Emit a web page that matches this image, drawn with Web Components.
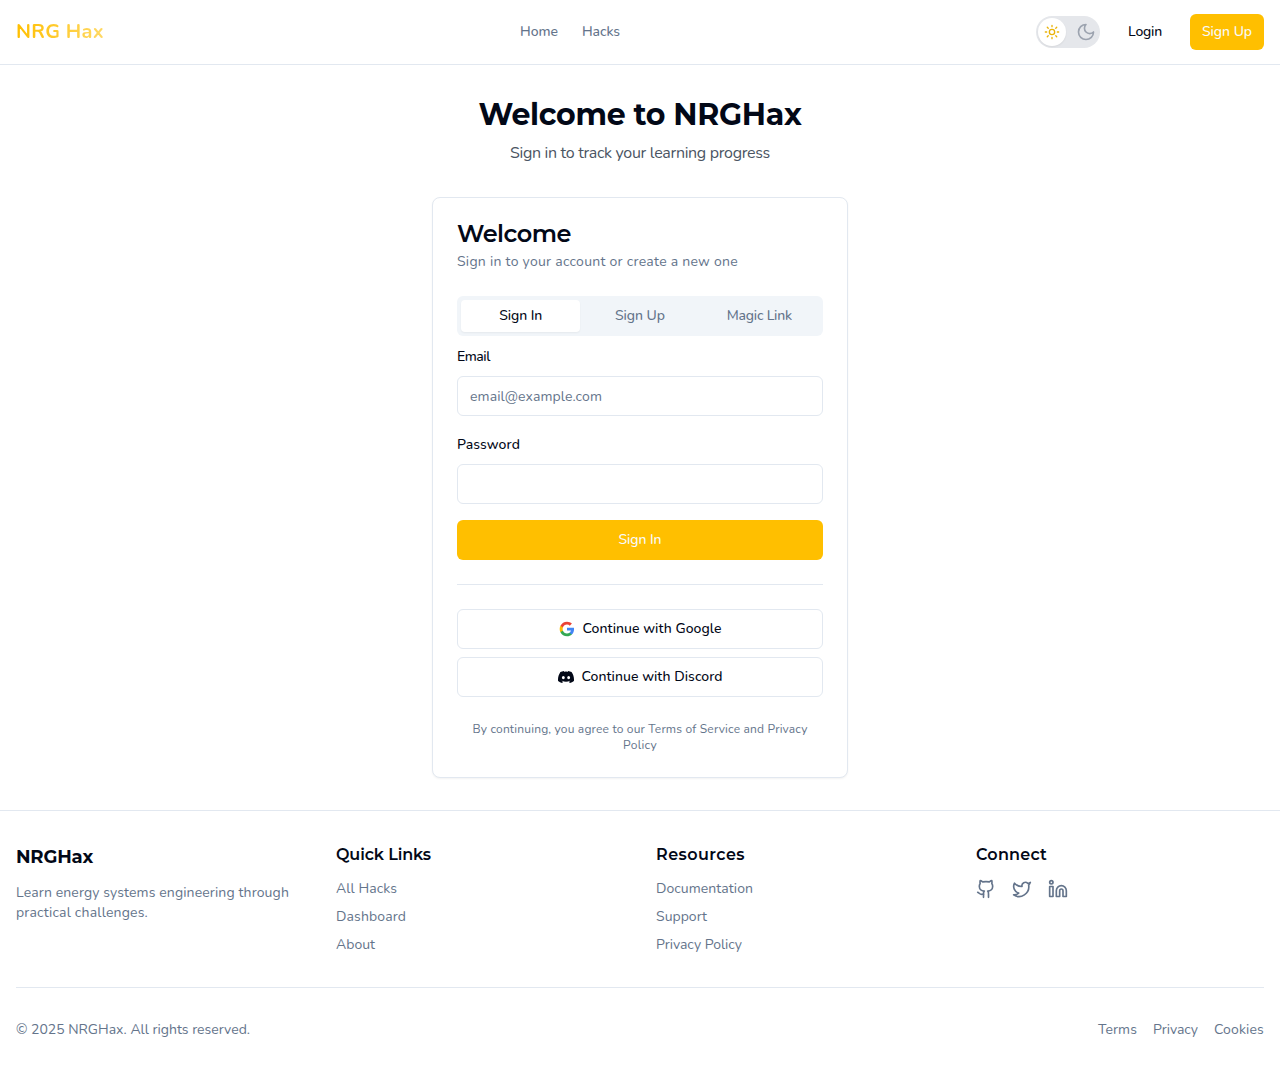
<!DOCTYPE html>
<html lang="en">
<head>
<meta charset="utf-8">
<title>NRG Hax</title>
<style>
html,body{margin:0;padding:0;background:#fff}
body{font-family:Nunito,Lato,"Open Sans",sans-serif;font-size:14px;line-height:20px;color:#020817;
--display:Montserrat,Inter,sans-serif;--line:#e2e8f0;--muted:#64748b;--brand:#ffbf00}
</style>
</head>
<body>
<nrg-app></nrg-app>
<script>
const define = (name, html, setup) => {
  const tpl = document.createElement('template');
  tpl.innerHTML = '<style>*{box-sizing:border-box}:host{display:block;box-sizing:border-box}</style>' + html;
  customElements.define(name, class extends HTMLElement {
    connectedCallback() {
      if (this.shadowRoot) return;
      this.attachShadow({mode: 'open'}).append(tpl.content.cloneNode(true));
      if (setup) setup(this, this.shadowRoot);
    }
  });
};

// Tracks a run of text so that it fills the given width.
const track = (root, text, width) => {
  const probe = document.createElement('span');
  probe.style.cssText = 'display:inline-block;white-space:pre;letter-spacing:0;width:max-content';
  probe.textContent = text;
  root.append(probe);
  const natural = probe.getBoundingClientRect().width;
  probe.remove();
  return (width - natural) / text.length + 'px';
};

define('fit-text', `<style>:host{display:block;flex:none;white-space:pre}</style><slot></slot>`,
  (host, root) => {
    const w = +host.getAttribute('w');
    host.style.letterSpacing = track(root, host.textContent, w);
    host.style.width = w + 'px';
  });

define('theme-toggle', `<style>
:host{width:64px;height:32px;border-radius:16px;background:#e5e7eb;padding:2px;display:flex;align-items:center;justify-content:space-between}
.knob{width:28px;height:28px;border-radius:50%;background:#fff;display:flex;align-items:center;justify-content:center;box-shadow:0 1px 2px #0001}
svg{fill:none;stroke-width:2;stroke-linecap:round;stroke-linejoin:round;display:block}
.moon{margin-right:2px}
</style>
<div class="knob"><svg width="16" height="16" viewBox="0 0 24 24" stroke="#eab308"><circle cx="12" cy="12" r="4"/><path d="M12 2v2M12 20v2M4.93 4.93l1.41 1.41M17.66 17.66l1.41 1.41M2 12h2M20 12h2M6.34 17.66l-1.41 1.41M19.07 4.93l-1.41 1.41"/></svg></div>
<svg class="moon" width="20" height="20" viewBox="0 0 24 24" stroke="#9ca3af"><path d="M12 3a6 6 0 0 0 9 9 9 9 0 1 1-9-9Z"/></svg>`);

define('ui-button', `<style>
:host{height:40px;border-radius:6px;padding:0 12px;display:flex;align-items:center;justify-content:center;gap:8px;font-weight:500}
:host([size=sm]){height:36px}
:host([kind=brand]){background:var(--brand);color:#f8fafc}
:host([kind=outline]){border:1px solid var(--line);background:#fff}
</style><slot name="icon"></slot><slot></slot>`);

define('site-header', `<style>
:host{height:65px;border-bottom:1px solid var(--line);padding:0 16px;display:flex;align-items:center;justify-content:space-between}
.logo{font-size:20px;font-weight:700;line-height:28px;color:transparent;background:linear-gradient(90deg,#ffbf00,#ffd966);background-clip:text;-webkit-background-clip:text}
nav{display:flex;gap:24px;color:var(--muted);font-weight:500}
.actions{display:flex;align-items:center;gap:16px}
</style>
<fit-text class="logo" w="88">NRG Hax</fit-text>
<nav><fit-text w="38">Home</fit-text><fit-text w="38">Hacks</fit-text></nav>
<div class="actions"><theme-toggle></theme-toggle>
<ui-button size="sm"><fit-text w="34">Login</fit-text></ui-button>
<ui-button size="sm" kind="brand"><fit-text w="50">Sign Up</fit-text></ui-button></div>`);

define('auth-tabs', `<style>
:host{height:40px;padding:4px;border-radius:6px;background:#f1f5f9;display:grid;grid-template-columns:repeat(3,1fr);color:var(--muted);font-weight:500}
div{display:flex;align-items:center;justify-content:center;border-radius:4px}
.on{background:#fff;color:#020817;box-shadow:0 1px 2px #0000000d}
</style><div class="on"><fit-text w="43">Sign In</fit-text></div><div><fit-text w="50">Sign Up</fit-text></div><div><fit-text w="65">Magic Link</fit-text></div>`);

define('form-field', `<style>
:host{display:flex;flex-direction:column;gap:8px}
label{display:block;height:24px;line-height:26px;font-weight:500}
input{display:block;width:100%;height:40px;border:1px solid var(--line);border-radius:6px;padding:0 12px;font:inherit;color:inherit;background:#fff;outline:0}
input::placeholder{color:var(--muted);opacity:1}
</style><label><slot></slot></label><input>`,
  (host, root) => {
    const input = root.querySelector('input');
    const hint = host.getAttribute('hint');
    input.type = host.getAttribute('type') || 'text';
    if (hint) {
      input.placeholder = hint;
      input.style.letterSpacing = track(root, hint, +host.getAttribute('hint-width'));
    }
  });

define('auth-card', `<style>
:host{width:416px;margin:0 auto;border:1px solid var(--line);border-radius:8px;padding:24px;box-shadow:0 1px 2px #0000000d;background:#fff}
h2{margin:0 0 6px;font:600 24px/24px var(--display)}
.desc{color:var(--muted);margin-bottom:24px}
form{margin-top:8px;display:flex;flex-direction:column;gap:16px}
hr{border:0;border-top:1px solid var(--line);margin:24px 0}
.social{display:flex;flex-direction:column;gap:8px;margin-bottom:24px}
.legal{font-size:12px;line-height:16px;color:var(--muted);display:flex;flex-direction:column;align-items:center}
svg{display:block}
</style>
<h2><fit-text w="114">Welcome</fit-text></h2>
<div class="desc"><fit-text w="281">Sign in to your account or create a new one</fit-text></div>
<auth-tabs></auth-tabs>
<form>
<form-field type="email" hint="email@example.com" hint-width="132"><fit-text w="33">Email</fit-text></form-field>
<form-field type="password"><fit-text w="63">Password</fit-text></form-field>
<ui-button kind="brand"><fit-text w="43">Sign In</fit-text></ui-button>
</form>
<hr>
<div class="social">
<ui-button kind="outline"><svg slot="icon" width="16" height="16" viewBox="0 0 24 24"><path fill="#4285F4" d="M22.56 12.25c0-.78-.07-1.53-.2-2.25H12v4.26h5.92c-.26 1.37-1.04 2.53-2.21 3.31v2.77h3.57c2.08-1.92 3.28-4.74 3.28-8.09z"/><path fill="#34A853" d="M12 23c2.97 0 5.46-.98 7.28-2.66l-3.57-2.77c-.98.66-2.23 1.06-3.71 1.06-2.86 0-5.29-1.93-6.16-4.53H2.18v2.84C3.99 20.53 7.7 23 12 23z"/><path fill="#FBBC05" d="M5.84 14.09c-.22-.66-.35-1.36-.35-2.09s.13-1.43.35-2.09V7.07H2.18C1.43 8.55 1 10.22 1 12s.43 3.45 1.18 4.93l2.85-2.22.81-.62z"/><path fill="#EA4335" d="M12 5.38c1.62 0 3.06.56 4.21 1.64l3.15-3.15C17.45 2.09 14.97 1 12 1 7.7 1 3.99 3.47 2.18 7.07l3.66 2.84c.87-2.6 3.3-4.53 6.16-4.53z"/></svg><fit-text w="139">Continue with Google</fit-text></ui-button>
<ui-button kind="outline"><svg slot="icon" width="16" height="16" viewBox="0 0 24 24" fill="#020817"><path d="M20.317 4.37a19.8 19.8 0 0 0-4.885-1.515.074.074 0 0 0-.079.037c-.21.375-.444.864-.608 1.25a18.3 18.3 0 0 0-5.487 0 12.6 12.6 0 0 0-.617-1.25.077.077 0 0 0-.079-.037A19.7 19.7 0 0 0 3.677 4.37a.07.07 0 0 0-.032.027C.533 9.046-.32 13.58.099 18.057a.082.082 0 0 0 .031.057 19.9 19.9 0 0 0 5.993 3.03.078.078 0 0 0 .084-.028 14 14 0 0 0 1.226-1.994.076.076 0 0 0-.041-.106 13 13 0 0 1-1.872-.892.077.077 0 0 1-.008-.128c.126-.094.252-.192.372-.291a.074.074 0 0 1 .077-.01c3.928 1.793 8.18 1.793 12.062 0a.074.074 0 0 1 .078.009c.12.1.246.198.373.292a.077.077 0 0 1-.006.127 12.3 12.3 0 0 1-1.873.892.077.077 0 0 0-.041.107c.36.698.772 1.362 1.225 1.993a.076.076 0 0 0 .084.028 19.8 19.8 0 0 0 6.002-3.03.077.077 0 0 0 .032-.054c.5-5.177-.838-9.674-3.549-13.66a.06.06 0 0 0-.031-.03zM8.02 15.33c-1.183 0-2.157-1.085-2.157-2.419 0-1.333.956-2.419 2.157-2.419 1.21 0 2.176 1.096 2.157 2.42 0 1.333-.956 2.418-2.157 2.418zm7.975 0c-1.183 0-2.157-1.085-2.157-2.419 0-1.333.955-2.419 2.157-2.419 1.21 0 2.176 1.096 2.157 2.42 0 1.333-.946 2.418-2.157 2.418z"/></svg><fit-text w="141">Continue with Discord</fit-text></ui-button>
</div>
<div class="legal"><fit-text w="335">By continuing, you agree to our Terms of Service and Privacy</fit-text><fit-text w="34">Policy</fit-text></div>`);

define('link-column', `<style>
h4{margin:0 0 12px;font:600 16px/24px var(--display);color:#020817}
.list{display:flex;flex-direction:column;gap:8px}
:host([row]) .list{flex-direction:row;gap:16px}
</style><h4><slot name="title"></slot></h4><div class="list"><slot></slot></div>`);

define('site-footer', `<style>
:host{border-top:1px solid var(--line);padding:32px 16px;color:var(--muted)}
.cols{display:grid;grid-template-columns:repeat(4,1fr);gap:32px}
h3{margin:0 0 12px;font:700 18px/28px var(--display);color:#020817}
.bottom{margin-top:32px;border-top:1px solid var(--line);padding-top:32px;display:flex;justify-content:space-between}
.links{display:flex;gap:16px}
svg{display:block;fill:none;stroke:var(--muted);stroke-width:2;stroke-linecap:round;stroke-linejoin:round}
</style>
<div class="cols">
<div><h3><fit-text w="77">NRGHax</fit-text></h3><fit-text w="273">Learn energy systems engineering through</fit-text><fit-text w="132">practical challenges.</fit-text></div>
<link-column><fit-text slot="title" w="95">Quick Links</fit-text><fit-text w="61">All Hacks</fit-text><fit-text w="70">Dashboard</fit-text><fit-text w="39">About</fit-text></link-column>
<link-column><fit-text slot="title" w="89">Resources</fit-text><fit-text w="97">Documentation</fit-text><fit-text w="51">Support</fit-text><fit-text w="86">Privacy Policy</fit-text></link-column>
<link-column row><fit-text slot="title" w="71">Connect</fit-text>
<svg width="20" height="20" viewBox="0 0 24 24"><path d="M15 22v-4a4.8 4.8 0 0 0-1-3.500c3 0 6-2 6-5.500.08-1.250-.27-2.480-1-3.500.28-1.150.28-2.350 0-3.500 0 0-1 0-3 1.500-2.640-.5-5.360-.5-8 0C6 2 5 2 5 2c-.3 1.150-.3 2.350 0 3.500A5.403 5.403 0 0 0 4 9c0 3.500 3 5.500 6 5.500-.39.490-.68 1.050-.85 1.650-.17.600-.22 1.230-.15 1.850v4"/><path d="M9 18c-4.510 2-5-2-7-2"/></svg>
<svg width="20" height="20" viewBox="0 0 24 24"><path d="M22 4s-.7 2.100-2 3.400c1.600 10-9.400 17.300-18 11.600 2.200.1 4.400-.6 6-2C3 15.500.5 9.600 3 5c2.200 2.600 5.600 4.100 9 4-.9-4.200 4-6.600 7-3.800 1.100 0 3-1.200 3-1.200z"/></svg>
<svg width="20" height="20" viewBox="0 0 24 24"><path d="M16 8a6 6 0 0 1 6 6v7h-4v-7a2 2 0 0 0-2-2 2 2 0 0 0-2 2v7h-4v-7a6 6 0 0 1 6-6z"/><rect width="4" height="12" x="2" y="9"/><circle cx="4" cy="4" r="2"/></svg>
</link-column>
</div>
<div class="bottom"><fit-text w="234">© 2025 NRGHax. All rights reserved.</fit-text><div class="links"><fit-text w="39">Terms</fit-text><fit-text w="45">Privacy</fit-text><fit-text w="50">Cookies</fit-text></div></div>`);

define('nrg-app', `<style>
main{padding:32px 0}
.intro{display:flex;flex-direction:column;align-items:center;gap:8px;margin-bottom:32px}
h1{margin:0;font:700 30px/36px var(--display)}
.sub{font-size:16px;line-height:24px;color:#4b5563}
</style>
<site-header></site-header>
<main><div class="intro"><h1><fit-text w="323">Welcome to NRGHax</fit-text></h1><fit-text class="sub" w="260">Sign in to track your learning progress</fit-text></div>
<auth-card></auth-card></main>
<site-footer></site-footer>`);
</script>
</body>
</html>
